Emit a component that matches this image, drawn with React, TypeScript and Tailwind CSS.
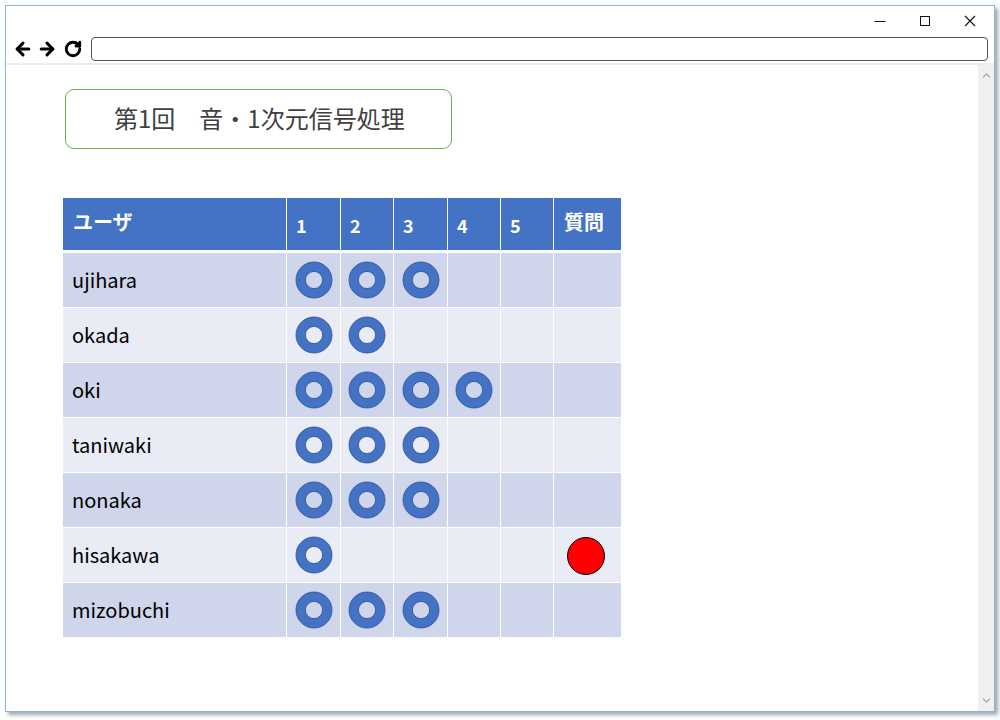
import { ArrowLeft, ArrowRight, RotateCw, ChevronUp, ChevronDown } from "lucide-react";

const rows: { name: string; done: number; question?: boolean }[] = [
  { name: "ujihara", done: 3 },
  { name: "okada", done: 2 },
  { name: "oki", done: 4 },
  { name: "taniwaki", done: 3 },
  { name: "nonaka", done: 3 },
  { name: "hisakawa", done: 1, question: true },
  { name: "mizobuchi", done: 3 },
];

function Ring() {
  return (
    <svg width="38" height="38" viewBox="0 0 38 38">
      <circle cx="19" cy="19" r="13.3" fill="none" stroke="#4472c4" strokeWidth="9.4" />
      <circle cx="19" cy="19" r="18" fill="none" stroke="#2f528f" strokeWidth="0.8" />
      <circle cx="19" cy="19" r="8.6" fill="none" stroke="#2f528f" strokeWidth="0.8" />
    </svg>
  );
}

function RedDot() {
  return (
    <svg width="40" height="40" viewBox="0 0 40 40">
      <circle cx="20" cy="20" r="18.5" fill="#ff0000" stroke="#000" strokeWidth="1" />
    </svg>
  );
}

const font = { fontFamily: '"Noto Sans CJK JP", "Noto Sans", sans-serif' };

export default function App() {
  return (
    <div className="w-[1000px] h-[720px] bg-white pt-[5px] pl-[5px]" style={font}>
      <div className="w-[990px] h-[707px] border border-[#86b6e8] bg-white shadow-[3px_3px_4px_rgba(0,0,0,0.35)] flex flex-col">
        {/* title bar */}
        <div className="h-[29px] flex justify-end items-center text-[#222]">
          <div className="w-[45px] flex justify-center">
            <svg width="12" height="12" viewBox="0 0 12 12"><path d="M0.5 6.5h11" stroke="#111" strokeWidth="1" /></svg>
          </div>
          <div className="w-[45px] flex justify-center">
            <svg width="12" height="12" viewBox="0 0 12 12"><rect x="1.5" y="1.5" width="9" height="9" fill="none" stroke="#111" strokeWidth="1" /></svg>
          </div>
          <div className="w-[45px] flex justify-center mr-[2px]">
            <svg width="12" height="12" viewBox="0 0 12 12"><path d="M1 1L11 11M11 1L1 11" stroke="#111" strokeWidth="1.1" /></svg>
          </div>
        </div>
        {/* toolbar */}
        <div className="h-[30px] flex items-center pl-[7px] pr-[6px] border-b-2 border-[#ececec]">
          <ArrowLeft size={20} strokeWidth={3.6} className="text-black" />
          <ArrowRight size={20} strokeWidth={3.6} className="text-black ml-[4px]" />
          <RotateCw size={18} strokeWidth={3.8} className="text-black ml-[7px]" />
          <div className="flex-1 ml-[9px] h-[24px] border border-[#555] rounded-[4px]" />
        </div>
        {/* content */}
        <div className="flex-1 flex min-h-0">
          <div className="flex-1 pl-[57px] pt-[24px]">
            <div className="ml-[2px] w-[387px] h-[60px] border border-[#70ad47] rounded-[9px] flex items-center pl-[48px] pb-[3px] text-[24px] font-normal text-[#404040]">
              第1回　音・1次元信号処理
            </div>
            <div className="mt-[49px] w-[558px] grid grid-cols-[223px_53px_52px_53px_52px_52px_67px] gap-x-px gap-y-px bg-white">
              <div className="col-span-7 grid grid-cols-subgrid h-[52px] mb-[2px]">
                <div className="bg-[#4472c4] text-white font-bold text-[20px] flex items-center pl-[10px] pb-[4px]">ユーザ</div>
                {["1", "2", "3", "4", "5"].map((n) => (
                  <div key={n} className="bg-[#4472c4] text-white font-bold text-[18px] flex items-center pl-[9px] pt-[2px]">{n}</div>
                ))}
                <div className="bg-[#4472c4] text-white font-bold text-[20px] flex items-center pl-[10px] pb-[4px]">質問</div>
              </div>
              {rows.map((r, i) => {
                const bg = i % 2 === 0 ? "bg-[#cfd5ea]" : "bg-[#e9ebf5]";
                return (
                  <div key={r.name} className="col-span-7 grid grid-cols-subgrid h-[54px]">
                    <div className={`${bg} flex items-center pl-[9px] text-[20px] text-black`}>{r.name}</div>
                    {[0, 1, 2, 3, 4].map((c) => (
                      <div key={c} className={`${bg} flex items-center justify-center`}>
                        {c < r.done && <Ring />}
                      </div>
                    ))}
                    <div className={`${bg} flex items-center justify-center pt-[2px] pr-[4px]`}>
                      {r.question && <RedDot />}
                    </div>
                  </div>
                );
              })}
            </div>
          </div>
          <div className="w-[16px] bg-[#f0f0f0] flex flex-col justify-between items-center py-[4px] text-[#a3a3a3]">
            <ChevronUp size={13} strokeWidth={2.5} />
            <ChevronDown size={13} strokeWidth={2.5} />
          </div>
        </div>
      </div>
    </div>
  );
}
